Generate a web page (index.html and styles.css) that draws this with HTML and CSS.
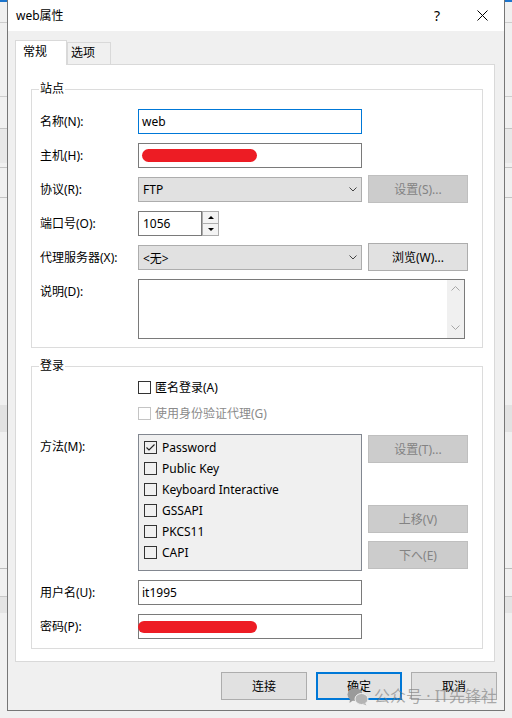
FILE: index.html
```html
<!DOCTYPE html>
<html lang="zh-CN">
<head>
    <meta charset="UTF-8">
    <meta name="viewport" content="width=device-width, initial-scale=1.0">
    <title>web属性</title>
    <link rel="stylesheet" href="styles.css">
</head>
<body>

<div class="window">
    <div class="titlebar">
        <span class="title">web属性</span>
        <span class="help">?</span>
        <svg class="close" width="11" height="11" viewBox="0 0 11 11">
            <path d="M0.5 0.5L10.5 10.5M10.5 0.5L0.5 10.5" stroke="#000" stroke-width="1" fill="none"/>
        </svg>
    </div>

    <div class="client">
        <div class="tabs">
            <div class="tab active">常规</div>
            <div class="tab">选项</div>
        </div>

        <div class="panel">
            <fieldset class="group site">
                <legend>站点</legend>
                <div class="row">
                    <label>名称(N):</label>
                    <div class="edit focused">web</div>
                </div>
                <div class="row">
                    <label>主机(H):</label>
                    <div class="edit"><span class="redact"></span></div>
                </div>
                <div class="row">
                    <label>协议(R):</label>
                    <div class="combo">
                        <span>FTP</span>
                        <svg width="8" height="5" viewBox="0 0 8 5"><path d="M0.5 0.5L4 4L7.5 0.5" stroke="#444" fill="none"/></svg>
                    </div>
                    <button class="btn" disabled>设置(S)...</button>
                </div>
                <div class="row">
                    <label>端口号(O):</label>
                    <div class="spin">
                        <div class="edit">1056</div>
                        <div class="arrows">
                            <span><i class="up"></i></span>
                            <span><i class="down"></i></span>
                        </div>
                    </div>
                </div>
                <div class="row">
                    <label>代理服务器(X):</label>
                    <div class="combo">
                        <span>&lt;无&gt;</span>
                        <svg width="8" height="5" viewBox="0 0 8 5"><path d="M0.5 0.5L4 4L7.5 0.5" stroke="#444" fill="none"/></svg>
                    </div>
                    <button class="btn">浏览(W)...</button>
                </div>
                <div class="row memo-row">
                    <label>说明(D):</label>
                    <div class="memo">
                        <div class="vscroll">
                            <svg width="9" height="5" viewBox="0 0 9 5"><path d="M0.5 4.5L4.5 0.5L8.5 4.5" stroke="#a6a6a6" fill="none"/></svg>
                            <svg width="9" height="5" viewBox="0 0 9 5"><path d="M0.5 0.5L4.5 4.5L8.5 0.5" stroke="#a6a6a6" fill="none"/></svg>
                        </div>
                    </div>
                </div>
            </fieldset>

            <fieldset class="group login">
                <legend>登录</legend>
                <div class="check-row"><span class="cb"></span>匿名登录(A)</div>
                <div class="check-row disabled"><span class="cb"></span>使用身份验证代理(G)</div>

                <div class="row method-row">
                    <label>方法(M):</label>
                    <div class="checklist">
                        <div class="item"><span class="cb">
                            <svg width="11" height="11" viewBox="0 0 11 11"><path d="M1.5 5.5L4 8L9.5 2.5" stroke="#222" stroke-width="1.1" fill="none"/></svg>
                        </span>Password</div>
                        <div class="item"><span class="cb"></span>Public Key</div>
                        <div class="item"><span class="cb"></span>Keyboard Interactive</div>
                        <div class="item"><span class="cb"></span>GSSAPI</div>
                        <div class="item"><span class="cb"></span>PKCS11</div>
                        <div class="item"><span class="cb"></span>CAPI</div>
                    </div>
                    <div class="side-buttons">
                        <button class="btn" disabled>设置(T)...</button>
                        <button class="btn move-up" disabled>上移(V)</button>
                        <button class="btn" disabled>下へ(E)</button>
                    </div>
                </div>

                <div class="row">
                    <label>用户名(U):</label>
                    <div class="edit">it1995</div>
                </div>
                <div class="row">
                    <label>密码(P):</label>
                    <div class="edit"><span class="redact wide"></span></div>
                </div>
            </fieldset>
        </div>

        <div class="buttons">
            <button class="btn dlg">连接</button>
            <button class="btn dlg default">确定</button>
            <button class="btn dlg">取消</button>
        </div>
    </div>

    <div class="watermark">
        <svg width="22" height="19" viewBox="0 0 22 19">
            <ellipse cx="8" cy="7.5" rx="7.5" ry="6.5" fill="#9a9a9a"/>
            <path d="M3 12L2.5 16L6.5 13Z" fill="#9a9a9a"/>
            <ellipse cx="14.5" cy="12" rx="6.5" ry="5.5" fill="#b4b4b4" stroke="#f0f0f0" stroke-width="1"/>
            <path d="M18 16L19.5 18.5L16 17Z" fill="#b4b4b4"/>
        </svg>
        <span>公众号 · IT先锋社</span>
    </div>
</div>

</body>
</html>
```

FILE: styles.css
```css
body {
    margin: 0;
    font-family: "Segoe UI", "Noto Sans", "Noto Sans CJK SC", sans-serif;
    font-size: 12px;
    color: #000;
    background:
        linear-gradient(#1c74cc, #1c74cc) 0 0 / 100% 2px no-repeat,
        linear-gradient(#cdcdcd, #cdcdcd) 0 22px / 100% 1px no-repeat,
        linear-gradient(#cdcdcd, #cdcdcd) 0 96px / 100% 1px no-repeat,
        linear-gradient(#c4c4c4, #c4c4c4) 0 128px / 100% 1px no-repeat,
        linear-gradient(#e8e8e8, #e8e8e8) 0 129px / 100% 34px no-repeat,
        linear-gradient(#c4c4c4, #c4c4c4) 0 167px / 100% 1px no-repeat,
        linear-gradient(#c4c4c4, #c4c4c4) 0 197px / 100% 1px no-repeat,
        linear-gradient(#e2e2e2, #e2e2e2) 0 405px / 100% 27px no-repeat,
        linear-gradient(#bdbdbd, #bdbdbd) 0 568px / 100% 1px no-repeat,
        linear-gradient(#c8c8c8, #c8c8c8) 0 596px / 100% 1px no-repeat,
        linear-gradient(#e4e4e4, #e4e4e4) 0 597px / 100% 16px no-repeat,
        #f0f0f0;
}

.window {
    position: relative;
    width: 496px;
    margin-left: 7px;
    border: 1px solid #767676;
    border-top: 0;
    background: #f0f0f0;
}

/* title bar */
.titlebar {
    height: 31px;
    display: flex;
    align-items: center;
    padding: 0 16px 0 8px;
    background: #fff;
}
.title {
    flex: 1;
    line-height: 16px;
}
.help {
    width: 10px;
    text-align: center;
    font-size: 14px;
    line-height: 16px;
}
.close {
    margin-left: 35px;
}

/* client area */
.client {
    padding: 9px 0 10px 7px;
}

.tabs {
    display: flex;
    align-items: flex-end;
    height: 24px;
}
.tab {
    box-sizing: border-box;
    height: 22px;
    padding: 0 3px;
    line-height: 20px;
    border: 1px solid #d9d9d9;
    border-bottom: 0;
    background: #f0f0f0;
    width: 44px;
}
.tab.active {
    position: relative;
    z-index: 1;
    height: 25px;
    width: 52px;
    margin-bottom: -1px;
    padding-left: 7px;
    line-height: 21px;
    background: #fff;
}

.panel {
    box-sizing: border-box;
    width: 480px;
    height: 598px;
    padding: 0 11px 14px 15px;
    border: 1px solid #d9d9d9;
    background: #fff;
}

.group {
    width: 452px;
    box-sizing: border-box;
    margin: 16px 0 0;
    padding: 12px 0 8px 8px;
    border: 1px solid #dcdcdc;
}
.group legend {
    margin-left: -1px;
    padding: 0 1px;
    line-height: 16px;
}
.group.login {
    margin-top: 10px;
    padding-top: 0;
    padding-bottom: 9px;
}

/* field rows */
.row {
    display: grid;
    grid-template-columns: 92px 224px 100px;
    column-gap: 6px;
    align-items: center;
    height: 25px;
    margin-bottom: 9px;
}
.row label {
    line-height: 25px;
    white-space: nowrap;
}
.row:last-child {
    margin-bottom: 0;
}
.row > .btn {
    margin: -2px 0 -1px;
}

.edit {
    box-sizing: border-box;
    height: 25px;
    padding-left: 3px;
    border: 1px solid #7a7a7a;
    background: #fff;
    display: flex;
    align-items: center;
    line-height: 16px;
}
.edit.focused {
    border-color: #0078d7;
}

.redact {
    display: inline-block;
    width: 115px;
    height: 13px;
    border-radius: 7px;
    background: #ed1c24;
}
.redact.wide {
    width: 119px;
    height: 12px;
    margin-left: -4px;
}

.combo {
    box-sizing: border-box;
    height: 25px;
    padding: 0 4px 0 4px;
    border: 1px solid #adadad;
    background: #e1e1e1;
    display: flex;
    align-items: center;
    justify-content: space-between;
}

.btn {
    box-sizing: border-box;
    height: 28px;
    width: 100px;
    padding: 0;
    margin: 0;
    border: 1px solid #adadad;
    background: #e1e1e1;
    color: #000;
    font: inherit;
}
.btn:disabled {
    border-color: #bfbfbf;
    background: #cccccc;
    color: #838383;
}

/* port spinner */
.spin {
    display: flex;
    width: 81px;
    height: 25px;
}
.spin .edit {
    width: 64px;
    padding-left: 4px;
}
.arrows {
    width: 17px;
    display: flex;
    flex-direction: column;
}
.arrows span {
    box-sizing: border-box;
    flex: 1;
    border: 1px solid #acacac;
    background: #f3f3f3;
    display: flex;
    align-items: center;
    justify-content: center;
}
.arrows span + span {
    border-top: 0;
}
.up, .down {
    width: 0;
    height: 0;
    border-left: 3px solid transparent;
    border-right: 3px solid transparent;
}
.up {
    border-bottom: 3px solid #000;
}
.down {
    border-top: 3px solid #000;
}

/* description box */
.memo-row {
    height: 60px;
    align-items: start;
}
.memo {
    grid-column: 2 / 4;
    box-sizing: border-box;
    width: 327px;
    height: 60px;
    border: 1px solid #7a7a7a;
    background: #fff;
    display: flex;
    justify-content: flex-end;
}
.vscroll {
    width: 17px;
    background: #f0f0f0;
    display: flex;
    flex-direction: column;
    justify-content: space-between;
    align-items: center;
    padding: 6px 0 8px;
}

/* checkboxes */
.cb {
    box-sizing: border-box;
    width: 13px;
    height: 13px;
    border: 1px solid #333;
    background: #fff;
    display: inline-flex;
    align-items: center;
    justify-content: center;
    flex: none;
}
.check-row {
    height: 26px;
    padding-left: 98px;
    display: flex;
    align-items: center;
    gap: 4px;
}
.check-row.disabled {
    color: #8a8a8a;
}
.check-row.disabled .cb {
    border-color: #c4c4c4;
}

.method-row {
    height: 137px;
    margin-top: 8px;
    align-items: start;
}
.checklist {
    box-sizing: border-box;
    height: 137px;
    padding: 2px 0 0 5px;
    border: 1px solid #828790;
    background: #f0f0f0;
}
.item {
    height: 21px;
    display: flex;
    align-items: center;
    gap: 5px;
}
.checklist .cb {
    background: #f0f0f0;
}
.side-buttons {
    display: flex;
    flex-direction: column;
    padding-top: 1px;
    gap: 8px;
}
.move-up {
    margin-top: 34px;
}

/* dialog buttons */
.buttons {
    display: flex;
    justify-content: flex-end;
    gap: 9px;
    padding-right: 7px;
    margin-top: 10px;
}
.btn.dlg {
    width: 86px;
}
.btn.default {
    border: 2px solid #0078d7;
}

.watermark {
    position: absolute;
    right: 7px;
    bottom: 4px;
    display: flex;
    align-items: center;
    gap: 5px;
    font-size: 16px;
    line-height: 20px;
    color: rgba(120, 120, 120, 0.6);
}
```
